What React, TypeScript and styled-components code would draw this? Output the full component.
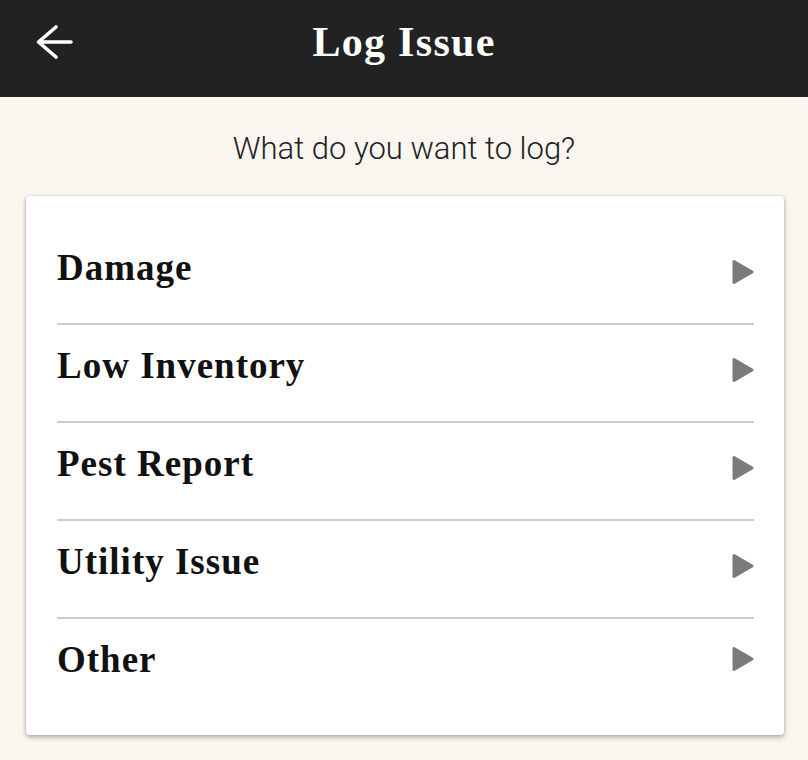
import React from "react";
import styled, { createGlobalStyle } from "styled-components";

const GlobalStyle = createGlobalStyle`
  html, body {
    margin: 0;
    padding: 0;
    background: #f9f6f0;
  }
  * { box-sizing: border-box; }
`;

const Page = styled.div`
  min-height: 760px;
  background: #f9f6f0;
  display: flex;
  flex-direction: column;
`;

const Header = styled.header`
  height: 97px;
  background: #222222;
  display: grid;
  grid-template-columns: 1fr auto 1fr;
  align-items: start;
`;

const BackButton = styled.button`
  justify-self: start;
  margin: 24px 0 0 35px;
  padding: 0;
  border: none;
  background: transparent;
  width: 40px;
  height: 36px;
  display: flex;
  cursor: pointer;
`;

const Title = styled.h1`
  margin: 0;
  padding-top: 18px;
  font-family: "Liberation Serif", "Times New Roman", serif;
  font-weight: 700;
  font-size: 42px;
  letter-spacing: 1.3px;
  line-height: normal;
  color: #ffffff;
`;

const Subtitle = styled.p`
  margin: 34px 0 0;
  text-align: center;
  font-family: Roboto, "Liberation Sans", sans-serif;
  font-weight: 300;
  font-size: 31px;
  line-height: 36px;
  color: #222222;
`;

const Card = styled.ul`
  list-style: none;
  margin: 29px 24px 0 26px;
  padding: 31px 30px 18px 31px;
  background: #ffffff;
  border-radius: 4px;
  box-shadow: 0 2px 5px rgba(0, 0, 0, 0.33), 0 0 2px rgba(0, 0, 0, 0.12);
`;

const Chevron = styled.svg`
  margin-top: 13px;
  flex: none;
`;

const Row = styled.li`
  height: 98px;
  padding-top: 19px;
  display: flex;
  justify-content: space-between;
  align-items: flex-start;
  border-bottom: 2px solid #cccccc;
  cursor: pointer;

  &:last-child {
    border-bottom: none;
  }

  &:last-child ${Chevron} {
    margin-top: 8px;
  }
`;

const Label = styled.span`
  font-family: "Liberation Serif", "Times New Roman", serif;
  font-weight: 700;
  font-size: 37px;
  letter-spacing: 1px;
  line-height: normal;
  color: #111111;
`;

const BackArrow = () => (
  <svg width="40" height="36" viewBox="0 0 40 36" fill="none">
    <path
      d="M3.5 18 H36 M21 3 L3.5 18 L21 33"
      stroke="#ffffff"
      strokeWidth="3.6"
      strokeLinecap="round"
      strokeLinejoin="round"
    />
  </svg>
);

const items = ["Damage", "Low Inventory", "Pest Report", "Utility Issue", "Other"];

export default function App() {
  return (
    <Page>
      <GlobalStyle />
      <Header>
        <BackButton aria-label="Back">
          <BackArrow />
        </BackButton>
        <Title>Log Issue</Title>
        <div />
      </Header>
      <Subtitle>What do you want to log?</Subtitle>
      <Card>
        {items.map((item) => (
          <Row key={item}>
            <Label>{item}</Label>
            <Chevron width="22" height="26" viewBox="0 0 22 26">
              <path
                d="M2 2.5 L20 13 L2 23.5 Z"
                fill="#7b7b7b"
                stroke="#7b7b7b"
                strokeWidth="3"
                strokeLinejoin="round"
              />
            </Chevron>
          </Row>
        ))}
      </Card>
    </Page>
  );
}
